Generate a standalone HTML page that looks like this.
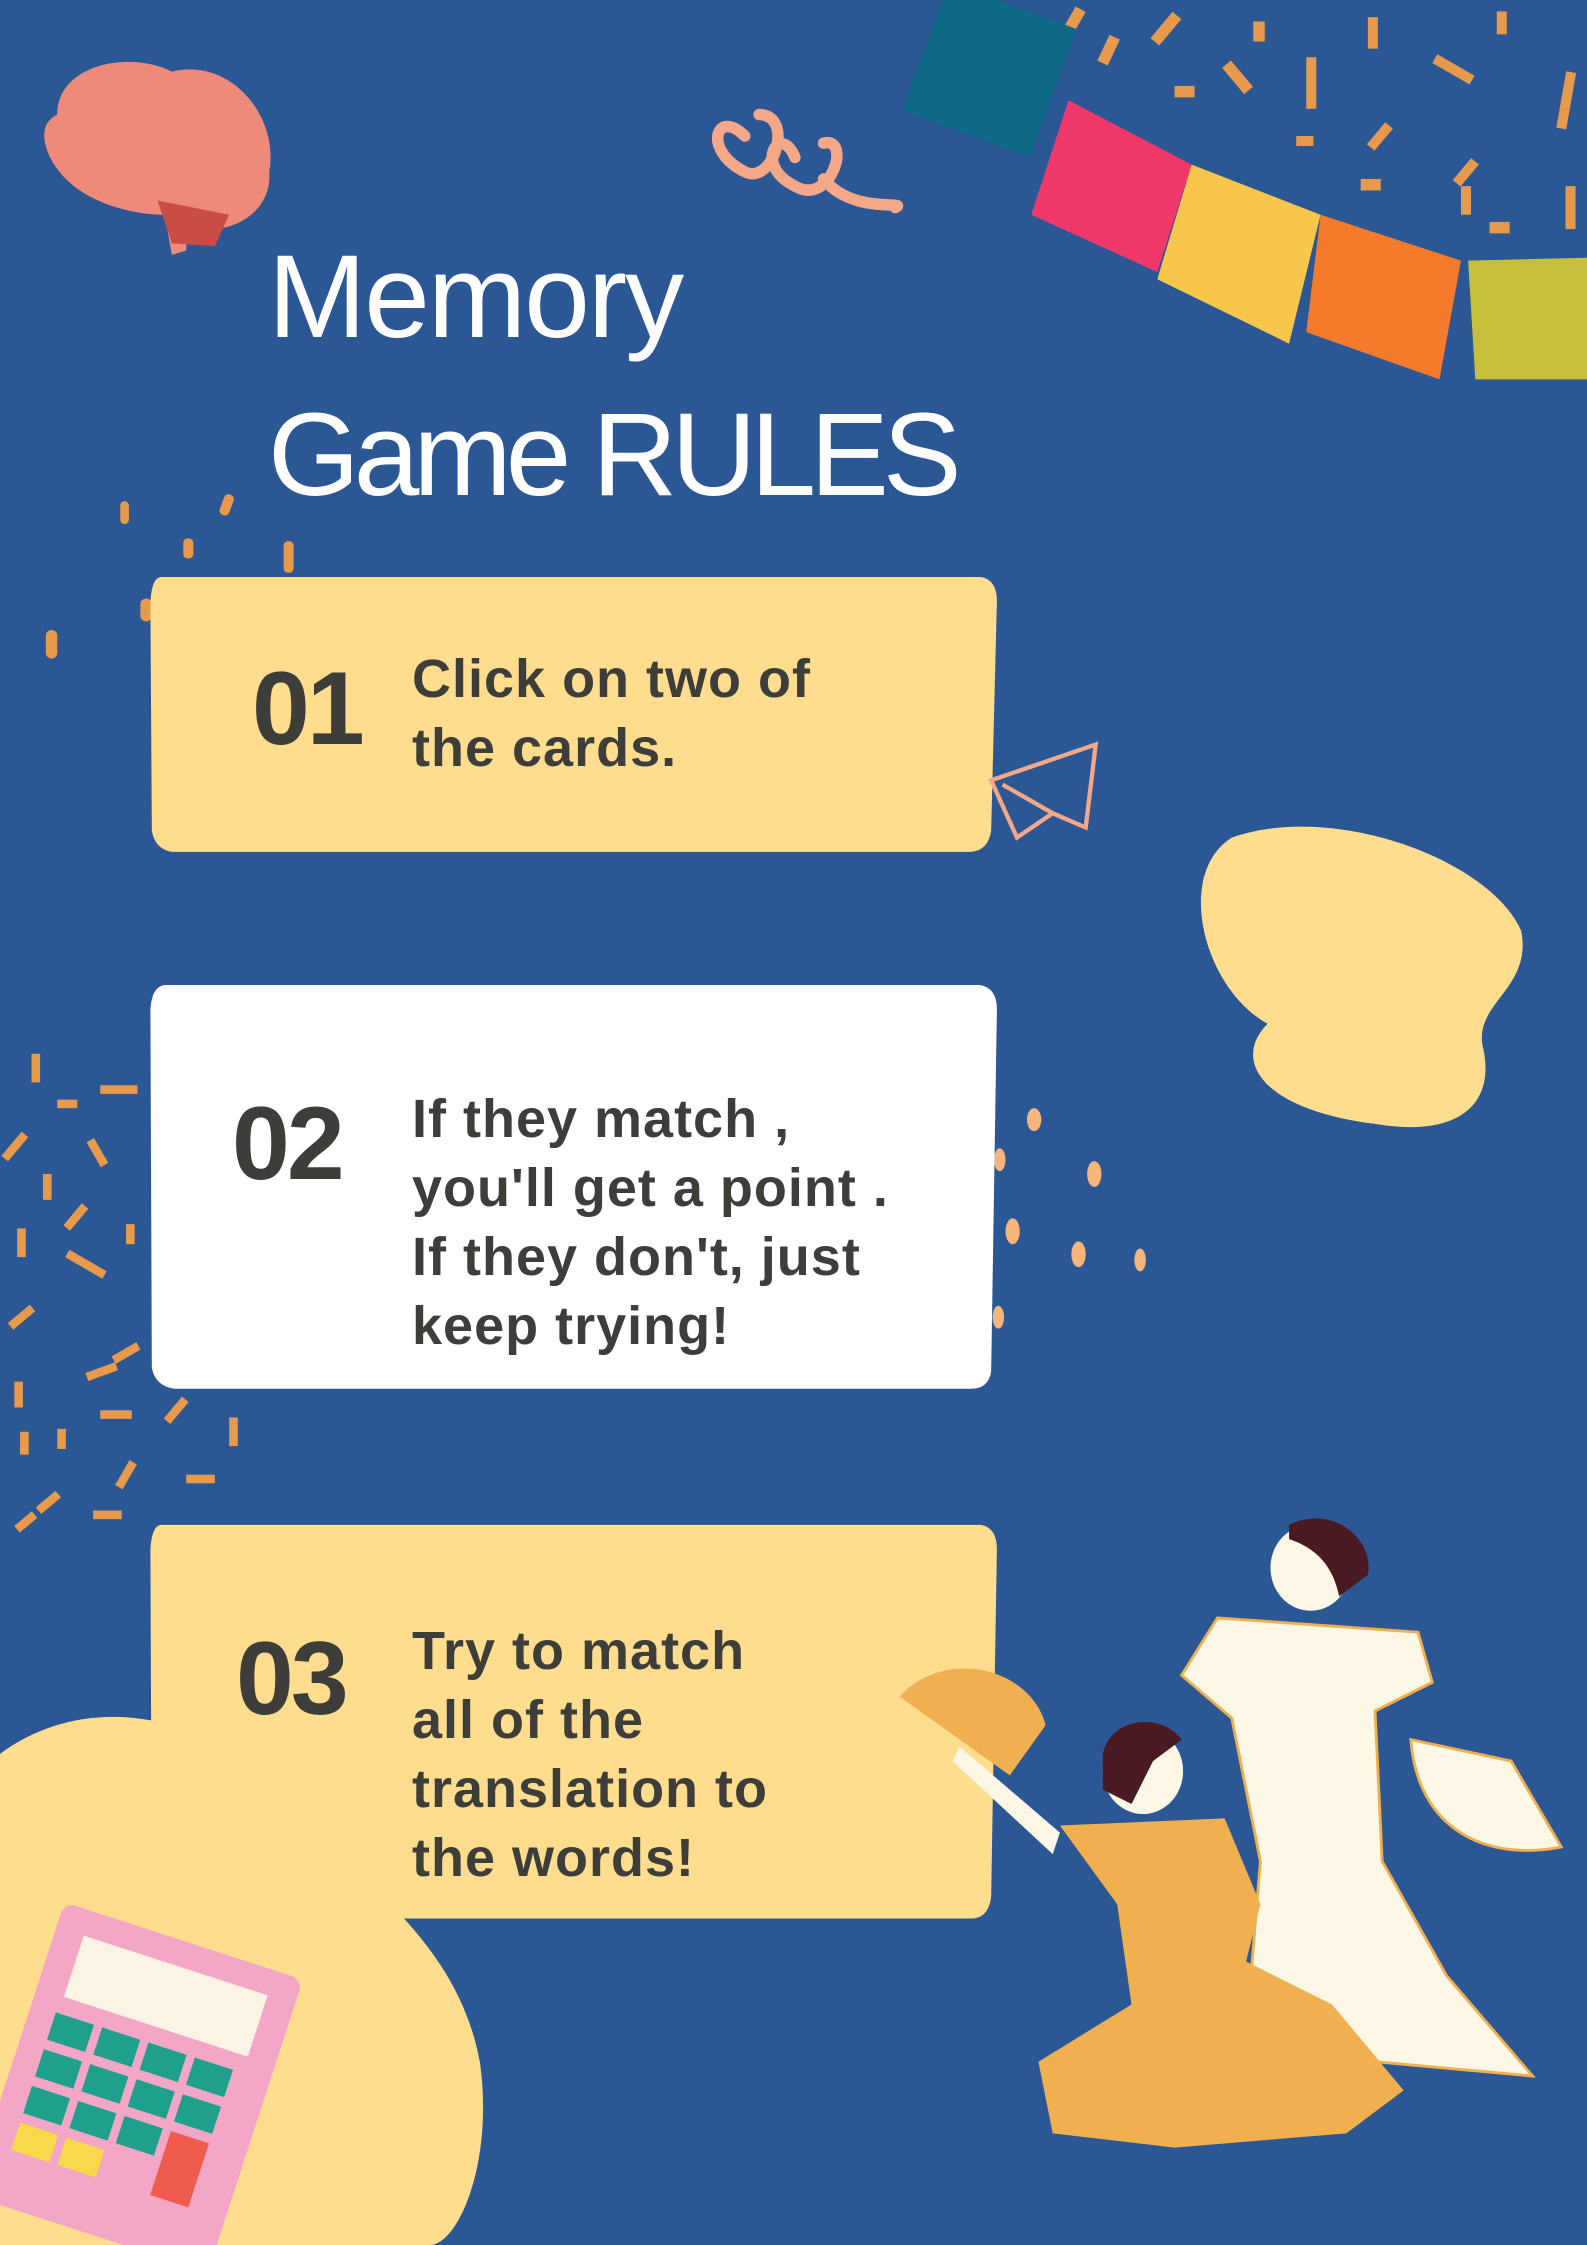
<!DOCTYPE html>
<html><head><meta charset="utf-8"><style>
html,body{margin:0;padding:0}
body{width:1587px;height:2245px;background:#2c5795;position:relative;overflow:hidden;font-family:"Liberation Sans",sans-serif}
svg.bg{position:absolute;left:0;top:0;width:1587px;height:2245px}
.t{position:absolute;color:#fff;font-size:118px;line-height:150px;left:268px;letter-spacing:-2px}
.n{position:absolute;color:#3d3d3a;font-weight:bold;font-size:104px;letter-spacing:-3px}
.p{position:absolute;color:#3d3d3a;font-weight:bold;font-size:54px;line-height:69px;left:412px;letter-spacing:1px}
</style></head><body>
<svg class="bg" viewBox="0 0 1108 1568" preserveAspectRatio="none">
<g fill="#e89a4c">
<rect x="745" y="5" width="8" height="22" transform="rotate(30 749 16)"/><rect x="810" y="8" width="8" height="24" transform="rotate(40 814 20)"/><rect x="875" y="15" width="8" height="14"/><rect x="955" y="12" width="7" height="22"/><rect x="1045" y="8" width="7" height="16"/>
<rect x="770" y="25" width="8" height="20" transform="rotate(25 774 35)"/><rect x="820" y="60" width="14" height="8"/><rect x="860" y="42" width="8" height="24" transform="rotate(-40 864 54)"/><rect x="912" y="40" width="7" height="36"/><rect x="1000" y="45" width="30" height="7" transform="rotate(30 1015 48)"/><rect x="1090" y="50" width="7" height="40" transform="rotate(10 1093 70)"/>
<rect x="905" y="95" width="12" height="7"/><rect x="960" y="85" width="7" height="20" transform="rotate(40 963 95)"/><rect x="1020" y="110" width="7" height="20" transform="rotate(40 1023 120)"/><rect x="950" y="125" width="14" height="8"/><rect x="1040" y="155" width="14" height="8"/><rect x="1093" y="130" width="7" height="30"/><rect x="1020" y="130" width="7" height="20"/>
<rect x="84" y="350" width="6" height="16" rx="3"/><rect x="128" y="376" width="7" height="14" rx="3"/><rect x="155" y="345" width="7" height="15" rx="3" transform="rotate(20 158 352)"/><rect x="198" y="378" width="7" height="22" rx="3"/><rect x="32" y="440" width="8" height="20" rx="4"/><rect x="98" y="418" width="8" height="16" rx="4"/>
<rect x="22" y="736" width="6" height="20"/><rect x="40" y="768" width="14" height="6"/><rect x="70" y="758" width="26" height="6"/><rect x="8" y="790" width="6" height="22" transform="rotate(40 11 800)"/><rect x="65" y="795" width="6" height="20" transform="rotate(-30 68 805)"/><rect x="30" y="820" width="6" height="18"/><rect x="50" y="840" width="6" height="20" transform="rotate(40 53 850)"/><rect x="12" y="858" width="6" height="20"/><rect x="88" y="855" width="6" height="14"/><rect x="45" y="880" width="30" height="6" transform="rotate(30 60 883)"/><rect x="12" y="910" width="6" height="20" transform="rotate(50 15 920)"/><rect x="85" y="935" width="6" height="20" transform="rotate(60 88 945)"/><rect x="60" y="955" width="22" height="6" transform="rotate(-20 71 958)"/><rect x="10" y="965" width="6" height="18"/><rect x="40" y="998" width="6" height="14"/><rect x="70" y="985" width="22" height="6"/><rect x="14" y="1000" width="6" height="16"/><rect x="120" y="975" width="6" height="20" transform="rotate(40 123 985)"/><rect x="160" y="990" width="6" height="20"/><rect x="85" y="1020" width="6" height="20" transform="rotate(30 88 1030)"/><rect x="30" y="1040" width="6" height="18" transform="rotate(50 33 1050)"/><rect x="130" y="1030" width="20" height="6"/><rect x="65" y="1055" width="20" height="6"/><rect x="15" y="1055" width="6" height="16" transform="rotate(50 18 1063)"/>
</g>
<g fill="#f6b57b"><ellipse cx="722" cy="782" rx="5" ry="8"/><ellipse cx="764" cy="820" rx="5" ry="9"/><ellipse cx="707" cy="860" rx="5" ry="9"/><ellipse cx="753" cy="876" rx="5" ry="9"/><ellipse cx="796" cy="880" rx="4" ry="8"/><ellipse cx="697" cy="920" rx="4" ry="8"/><ellipse cx="698" cy="810" rx="4" ry="8"/></g>
<g transform="rotate(20 700 60)"><rect x="640" y="5" width="95" height="95" fill="#0e6a86"/></g>
<path d="M746 70 L832 115 L808 190 L720 150 Z" fill="#f0386b"/>
<path d="M832 115 L922 150 L900 240 L808 195 Z" fill="#f8c64b"/>
<path d="M922 150 L1020 182 L1005 265 L912 232 Z" fill="#f47b2c"/>
<path d="M1025 182 L1108 180 L1108 265 L1030 265 Z" fill="#c4c03a"/>
<path d="M520 95 c-20 -20 -30 10 0 25 c20 10 35 -40 10 -40 M555 110 c-10 -25 -30 5 0 20 c25 15 40 -35 20 -30 M575 125 c20 25 60 15 50 20" fill="none" stroke="#f4a888" stroke-width="8" stroke-linecap="round"/>
<path d="M40 80 C40 45 90 35 120 50 C160 40 195 80 188 120 C190 150 160 165 130 160 L130 175 L120 178 L115 150 C90 150 50 140 35 110 C28 95 30 85 40 80 Z" fill="#ee8a7a"/>
<path d="M110 140 L160 150 L150 172 L120 170 Z" fill="#c94d45"/>
<path d="M112 403 L685 403 Q696 405 696 420 L692 580 Q690 594 678 595 L120 595 Q108 593 106 580 L105 420 Q106 404 112 403 Z" fill="#fedd8f"/>
<path d="M115 688 L684 688 Q696 690 696 705 L692 958 Q690 970 678 970 L122 970 Q108 968 106 955 L105 705 Q106 689 115 688 Z" fill="#fff"/>
<path d="M0 1225 C60 1180 150 1195 200 1260 C260 1320 320 1360 335 1440 C345 1510 320 1568 300 1568 L0 1568 Z" fill="#fedd8f"/>
<path d="M112 1065 L685 1065 Q696 1067 696 1082 L692 1325 Q690 1340 678 1340 L120 1340 Q108 1338 106 1325 L105 1082 Q106 1066 112 1065 Z" fill="#fedd8f"/>
<path d="M692 545 L765 520 L758 578 L735 568 L710 585 Z M700 548 L735 568" fill="none" stroke="#f4a888" stroke-width="3"/>
<path d="M860 585 C930 560 1040 600 1062 650 C1070 690 1030 700 1035 730 C1045 770 1020 795 960 785 C880 775 860 740 885 715 C840 690 820 610 860 585 Z" fill="#fedd8f"/>
<g transform="rotate(18 95 1450)"><rect x="10" y="1350" width="175" height="215" rx="8" fill="#f3a6c6"/><rect x="30" y="1368" width="135" height="45" fill="#fbf3e4"/>
<g fill="#1fa08c"><rect x="28" y="1425" width="28" height="20"/><rect x="62" y="1425" width="28" height="20"/><rect x="96" y="1425" width="28" height="20"/><rect x="130" y="1425" width="28" height="20"/><rect x="28" y="1452" width="28" height="20"/><rect x="62" y="1452" width="28" height="20"/><rect x="96" y="1452" width="28" height="20"/><rect x="130" y="1452" width="28" height="20"/><rect x="28" y="1479" width="28" height="20"/><rect x="62" y="1479" width="28" height="20"/><rect x="96" y="1479" width="28" height="20"/></g>
<g fill="#f7d94a"><rect x="28" y="1506" width="28" height="20"/><rect x="62" y="1506" width="28" height="20"/></g><rect x="130" y="1479" width="28" height="47" fill="#ef5b4c"/></g>
<path d="M628 1185 C660 1150 720 1165 730 1205 L705 1240 Z" fill="#f0b050"/>
<path d="M985 1215 L1055 1230 L1090 1290 C1040 1300 990 1280 985 1215 Z" fill="#fdf8e6" stroke="#f0b050" stroke-width="2"/>
<path d="M850 1130 L990 1140 L1000 1175 L960 1195 L965 1300 L1010 1380 L1070 1450 L960 1440 L870 1420 L880 1300 L860 1200 L825 1170 Z" fill="#fdf8e6" stroke="#f0b050" stroke-width="2"/>
<ellipse cx="915" cy="1095" rx="28" ry="30" fill="#fdf8e6"/><path d="M900 1065 C930 1050 960 1075 955 1100 L935 1115 C930 1090 915 1080 900 1075 Z" fill="#4a1a22"/>
<path d="M740 1275 L855 1270 L880 1330 L870 1370 L930 1400 L980 1460 L940 1490 L820 1500 L735 1490 L725 1440 L790 1400 L780 1330 Z" fill="#f0b050"/>
<path d="M670 1220 L740 1280 L735 1295 L665 1230 Z" fill="#fdf8e6"/>
<ellipse cx="798" cy="1237" rx="28" ry="30" fill="#fdf8e6"/><path d="M770 1225 C775 1200 810 1195 825 1215 L805 1230 L790 1260 L770 1250 Z" fill="#4a1a22"/>
</svg>
<div class="t" style="top:222px">Memory</div>
<div class="t" style="top:380px;letter-spacing:-6px">Game RULES</div>
<div class="n" style="left:252px;top:650px">01</div>
<div class="p" style="top:645px">Click on two of<br>the cards.</div>
<div class="n" style="left:232px;top:1085px">02</div>
<div class="p" style="top:1085px">If they match ,<br>you'll get a point .<br>If they don't, just<br>keep trying!</div>
<div class="n" style="left:236px;top:1620px">03</div>
<div class="p" style="top:1617px">Try to match<br>all of the<br>translation to<br>the words!</div>
</body></html>
